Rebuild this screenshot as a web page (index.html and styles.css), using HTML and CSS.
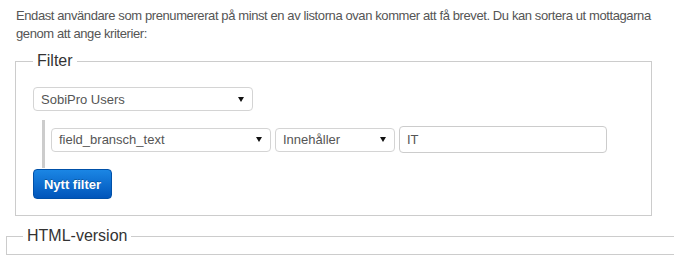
FILE: index.html
```html
<!DOCTYPE html>
<html lang="sv">
<head>
<meta charset="utf-8">
<title>Filter</title>
<link rel="stylesheet" href="styles.css">
</head>
<body>
<div class="page">
  <p class="intro">Endast användare som prenumererat på minst en av listorna ovan kommer att få brevet. Du kan sortera ut mottagarna<br>genom att ange kriterier:</p>
  <fieldset class="filter">
    <legend>Filter</legend>
    <div class="select list-select"><span class="select-text">SobiPro Users</span><span class="arrow"></span></div>
    <div class="rule-row">
      <div class="select field-select"><span class="select-text">field_bransch_text</span><span class="arrow"></span></div>
      <div class="select op-select"><span class="select-text">Innehåller</span><span class="arrow"></span></div>
      <input class="value-input" type="text" value="IT">
    </div>
    <button class="btn-primary" type="button">Nytt filter</button>
  </fieldset>
  <fieldset class="html-version">
    <legend>HTML-version</legend>
  </fieldset>
</div>
</body>
</html>
```

FILE: styles.css
```css
html, body {
  margin: 0;
  padding: 0;
  overflow: hidden;
  background: #fff;
}
body {
  font-family: "Liberation Sans", Arial, sans-serif;
  font-size: 13px;
  color: #555;
}
.page {
  width: 674px;
  overflow: hidden;
}
.intro {
  margin: 7px 0 0 16px;
  line-height: 18px;
  white-space: nowrap;
  letter-spacing: -0.4px;
}
fieldset {
  border: 1px solid #cccccc;
  margin: 0;
  min-width: 0;
}
legend {
  font-size: 16px;
  line-height: 20px;
  color: #333;
  padding: 0 4px;
}
.filter {
  margin: 8px 0 0 15px;
  width: 637px;
  box-sizing: border-box;
  padding: 16px 17px 16px 17px;
}
.html-version {
  margin: 10px 0 0 6px;
  width: 668px;
  box-sizing: border-box;
  border-right: none;
  padding: 0 16px 8px 16px;
}
.select {
  display: flex;
  align-items: center;
  justify-content: space-between;
  box-sizing: border-box;
  height: 24px;
  border: 1px solid #d4d4d4;
  border-radius: 4px;
  background: #fff;
  padding: 0 8px 0 7px;
  color: #555;
}
.list-select { width: 220px; }
.field-select { width: 220px; }
.op-select { width: 120px; }
.arrow {
  width: 0;
  height: 0;
  border-left: 3px solid transparent;
  border-right: 3px solid transparent;
  border-top: 5px solid #111;
}
.rule-row {
  display: flex;
  align-items: center;
  gap: 4px;
  margin: 9px 0 0 9px;
  border-left: 3px solid #cccccc;
  padding: 6px 0 15px 6px;
}
.value-input {
  box-sizing: border-box;
  width: 208px;
  height: 27px;
  border: 1px solid #cccccc;
  border-radius: 4px;
  padding: 0 7px;
  font-family: inherit;
  font-size: 13px;
  color: #555;
  margin: 0;
}
.btn-primary {
  display: block;
  box-sizing: border-box;
  width: 79px;
  height: 30px;
  margin: 1px 0 0 0;
  padding: 0;
  border: 1px solid #0050a8;
  border-radius: 4px;
  background: linear-gradient(#1b86e4, #0055ba);
  color: #fff;
  font-family: inherit;
  font-size: 13px;
  font-weight: bold;
  text-shadow: 0 -1px 0 rgba(0, 0, 0, 0.25);
}
```
